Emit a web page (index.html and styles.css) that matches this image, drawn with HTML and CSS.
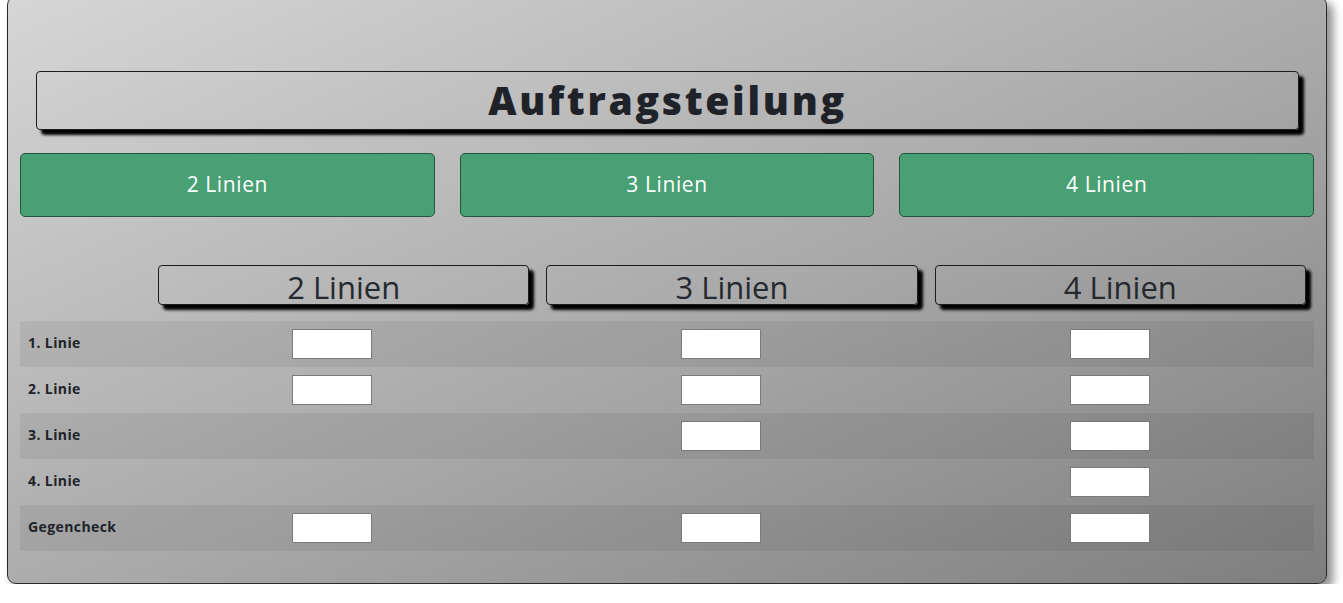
FILE: index.html
```html
<!DOCTYPE html>
<html lang="de">
<head>
<meta charset="utf-8">
<title>Auftragsteilung</title>
<link rel="stylesheet" href="styles.css">
</head>
<body>
<div class="panel">
  <div class="title-box"><h1 class="title">Auftragsteilung</h1></div>
  <div class="btn-row">
    <button class="btn">2 Linien</button>
    <button class="btn">3 Linien</button>
    <button class="btn">4 Linien</button>
  </div>
  <div class="head-row">
    <div class="col-head">2 Linien</div>
    <div class="col-head">3 Linien</div>
    <div class="col-head">4 Linien</div>
  </div>
  <div class="table">
    <div class="row odd">
      <div class="label">1. Linie</div>
      <div class="cell"><input class="field" type="text"></div>
      <div class="cell"><input class="field" type="text"></div>
      <div class="cell"><input class="field" type="text"></div>
    </div>
    <div class="row">
      <div class="label">2. Linie</div>
      <div class="cell"><input class="field" type="text"></div>
      <div class="cell"><input class="field" type="text"></div>
      <div class="cell"><input class="field" type="text"></div>
    </div>
    <div class="row odd">
      <div class="label">3. Linie</div>
      <div class="cell"></div>
      <div class="cell"><input class="field" type="text"></div>
      <div class="cell"><input class="field" type="text"></div>
    </div>
    <div class="row">
      <div class="label">4. Linie</div>
      <div class="cell"></div>
      <div class="cell"></div>
      <div class="cell"><input class="field" type="text"></div>
    </div>
    <div class="row odd">
      <div class="label">Gegencheck</div>
      <div class="cell"><input class="field" type="text"></div>
      <div class="cell"><input class="field" type="text"></div>
      <div class="cell"><input class="field" type="text"></div>
    </div>
  </div>
</div>
</body>
</html>
```

FILE: styles.css
```css
html, body {
  margin: 0;
  padding: 0;
  background: #ffffff;
}

body {
  font-family: "Open Sans", "Noto Sans", sans-serif;
  color: #222429;
}

.panel {
  box-sizing: border-box;
  width: 1320px;
  height: 588px;
  margin: -4px 0 0 7px;
  padding: 74px 12px 0 12px;
  border: 1px solid #2a2a2a;
  border-radius: 9px;
  background: linear-gradient(to bottom right, #d6d6d6 0%, #a8a8a8 55%, #7e7e7e 100%);
  box-shadow: 6px 6px 10px rgba(0, 0, 0, 0.45);
}

.title-box {
  box-sizing: border-box;
  height: 59px;
  margin: 0 15px 0 16px;
  border: 1px solid #1c1c1c;
  border-radius: 4px;
  box-shadow: 5px 5px 3px #000000;
  display: flex;
  align-items: center;
  justify-content: center;
}

.title {
  margin: 0;
  font-size: 39px;
  font-weight: 800;
  letter-spacing: 2.7px;
  line-height: 1;
  padding-bottom: 3px;
  color: #1f2329;
}

.btn-row {
  display: flex;
  gap: 25px;
  margin-top: 23px;
}

.btn {
  flex: 1;
  height: 64px;
  margin: 0;
  border: 1px solid #24563c;
  border-radius: 5px;
  background: #48a074;
  color: #ffffff;
  font-family: "Open Sans", "Noto Sans", sans-serif;
  font-size: 21px;
  letter-spacing: 0.6px;
  padding: 0 0 2px 0;
}

.head-row {
  display: flex;
  gap: 17px;
  margin: 48px 8px 0 138px;
}

.col-head {
  flex: 1;
  box-sizing: border-box;
  height: 40px;
  border: 1px solid #1c1c1c;
  border-radius: 4px;
  box-shadow: 5px 5px 3px #000000;
  font-size: 31px;
  font-weight: 500;
  line-height: 42px;
  text-align: center;
  color: #25282d;
  white-space: nowrap;
}

.table {
  margin-top: 16px;
}

.row {
  display: grid;
  grid-template-columns: 117px 389px 389px 389px;
  height: 46px;
  align-items: center;
}

.row.odd {
  background: rgba(0, 0, 0, 0.06);
}

.label {
  padding-left: 8px;
  font-size: 14px;
  font-weight: 700;
  letter-spacing: 0.4px;
  padding-bottom: 4px;
  color: #202328;
}

.cell {
  display: flex;
  justify-content: center;
}

.field {
  box-sizing: border-box;
  width: 80px;
  height: 30px;
  margin: 0;
  padding: 0;
  border: 1px solid #7a7a7a;
  background: #ffffff;
}
```
